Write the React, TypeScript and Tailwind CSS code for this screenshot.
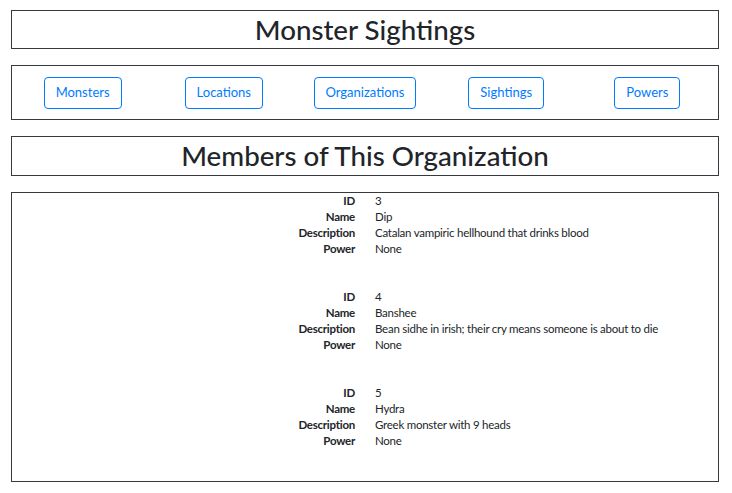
import React from 'react'

type Member = { id: number; name: string; description: string; power: string }

const members: Member[] = [
  { id: 3, name: 'Dip', description: 'Catalan vampiric hellhound that drinks blood', power: 'None' },
  { id: 4, name: 'Banshee', description: 'Bean sidhe in irish; their cry means someone is about to die', power: 'None' },
  { id: 5, name: 'Hydra', description: 'Greek monster with 9 heads', power: 'None' },
]

const links = ['Monsters', 'Locations', 'Organizations', 'Sightings', 'Powers']

function MemberRow({ label, value }: { label: string; value: React.ReactNode }) {
  return (
    <div className="grid grid-cols-2 leading-[16px]">
      <dt className="pr-[10px] text-right font-bold">{label}</dt>
      <dd className="pl-[10px]">{value}</dd>
    </div>
  )
}

export default function App() {
  return (
    <div className="min-h-screen bg-white pt-[10px] text-[#212529] font-['Lato',sans-serif]">
      <div className="ml-[11px] flex w-[708px] flex-col gap-4">
        <header className="flex h-[39px] items-center justify-center border border-[#343a40]">
          <h1 className="text-[27.7px] font-medium leading-none">Monster Sightings</h1>
        </header>

        <nav className="grid h-[55px] grid-cols-5 items-center border border-[#343a40]">
          {links.map((l) => (
            <div key={l} className="flex justify-center">
              <button className="h-[32px] rounded-[4px] border border-[#007bff] px-[11px] pt-px text-[13px] text-[#007bff]">
                {l}
              </button>
            </div>
          ))}
        </nav>

        <div className="flex h-[40px] items-center justify-center border border-[#343a40]">
          <h2 className="text-[27.7px] font-medium leading-none">Members of This Organization</h2>
        </div>

        <section className="border border-[#343a40] text-[11.5px] tracking-[-0.25px]">
          {members.map((m) => (
            <dl key={m.id} className="mb-8">
              <MemberRow label="ID" value={m.id} />
              <MemberRow label="Name" value={m.name} />
              <MemberRow label="Description" value={m.description} />
              <MemberRow label="Power" value={m.power} />
            </dl>
          ))}
        </section>
      </div>
    </div>
  )
}
